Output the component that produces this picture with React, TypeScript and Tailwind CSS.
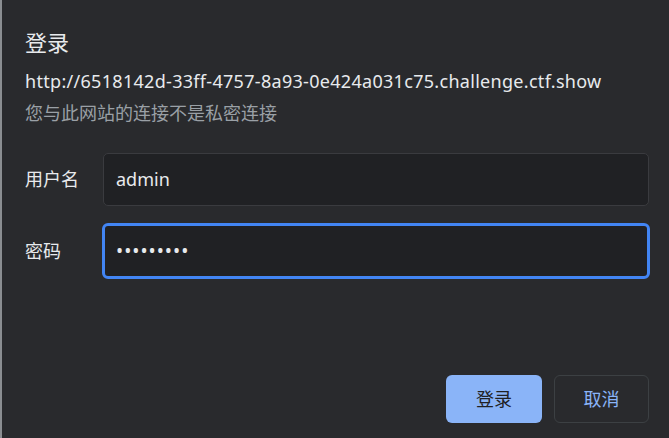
import React from "react";

const font = { fontFamily: '"Noto Sans", "Noto Sans CJK SC", sans-serif' };

export default function App() {
  return (
    <div
      className="w-[669px] h-[438px] bg-[#292a2d] border-l-2 border-[#8a8d91] pl-[23px] pr-[20px] flex flex-col text-[#e8eaed] overflow-hidden"
      style={font}
    >
      <div className="mt-[27px] h-[30px] leading-[30px] text-[22px]">登录</div>
      <div className="mt-[12px] h-[24px] leading-[24px] text-[18px] tracking-[0.3px] whitespace-nowrap">
        http://6518142d-33ff-4757-8a93-0e424a031c75.challenge.ctf.show
      </div>
      <div className="mt-[7px] h-[26px] leading-[26px] text-[18px] text-[#9aa0a6]">
        您与此网站的连接不是私密连接
      </div>

      <div className="mt-[27px] flex items-center">
        <div className="w-[78px] text-[18px]">用户名</div>
        <div className="flex-1 h-[53px] rounded-[5px] border border-[#3a3b3f] bg-[#202124] flex items-center pl-[12px] text-[18px]">
          admin
        </div>
      </div>

      <div className="mt-[17px] flex items-center">
        <div className="w-[77px] text-[18px]">密码</div>
        <div className="flex-1 -mr-px h-[56px] rounded-[6px] border-[3px] border-[#4285f4] bg-[#202124] flex items-center pl-[11px] text-[19px] tracking-[1px]">
          •••••••••
        </div>
      </div>

      <div className="mt-[96px] flex justify-end gap-[12px]">
        <button className="w-[96px] h-[48px] rounded-[6px] bg-[#8ab4f8] text-[#202124] text-[18px]">
          登录
        </button>
        <button className="w-[95px] h-[48px] rounded-[6px] border border-[#3c4043] bg-transparent text-[#8ab4f8] text-[18px]">
          取消
        </button>
      </div>
    </div>
  );
}
